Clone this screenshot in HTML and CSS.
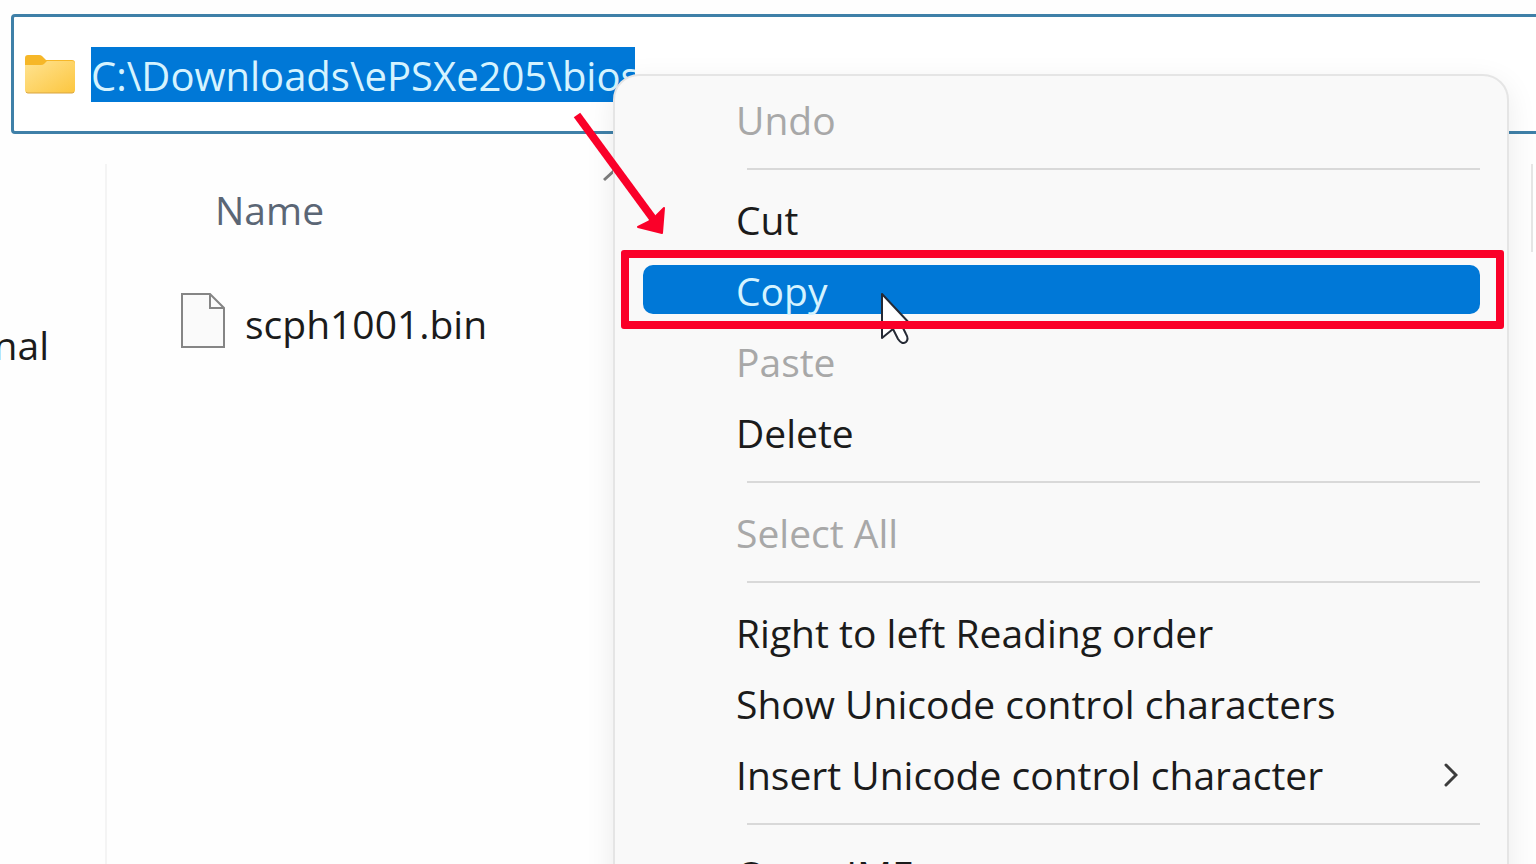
FILE: index.html
```
<!DOCTYPE html>
<html lang="en">
<head>
    <meta charset="UTF-8">
    <meta name="viewport" content="width=device-width, initial-scale=1.0">
    <title>bios</title>
    <link rel="stylesheet" href="styles.css">
</head>
<body>

<div class="explorer">
    <!-- Address bar -->
    <div class="address-bar">
        <svg class="folder-icon" viewBox="0 0 50 40" aria-hidden="true">
            <defs>
                <linearGradient id="folder-front" x1="0" y1="0" x2="1" y2="1">
                    <stop offset="0" stop-color="#ffe391"/>
                    <stop offset="1" stop-color="#fcc63f"/>
                </linearGradient>
            </defs>
            <path d="M0 14V4q0-3 3-3h11q2 0 3 1l4 4h26q3 0 3 3v6z" fill="#f6b728"/>
            <path d="M0 11h16q2 0 3-1l3-3h25q3 0 3 3v26q0 3-3 3H3q-3 0-3-3z" fill="url(#folder-front)"/>
            <path d="M1 38q1 1 2 1h44q1 0 2-1" fill="none" stroke="#d9a441" stroke-width="1"/>
        </svg>
        <input class="address-input" type="text" aria-label="Address" value="C:\Downloads\ePSXe205\bios">
    </div>

    <div class="content">
        <nav class="sidebar">
            <a class="sidebar-link" href="#">nal</a>
        </nav>

        <table class="files">
            <thead>
                <tr><th>Name</th></tr>
            </thead>
            <tbody>
                <tr>
                    <td>
                        <div class="file">
                            <svg class="file-icon" viewBox="0 0 44 56" aria-hidden="true">
                                <path d="M1 1h28l14 14v39H1z" fill="#fafafa" stroke="#858585" stroke-width="2"/>
                                <path d="M29 1v14h14" fill="none" stroke="#858585" stroke-width="2"/>
                            </svg>
                            <span class="file-name">scph1001.bin</span>
                        </div>
                    </td>
                </tr>
            </tbody>
        </table>
        <div class="column-edge"></div>
    </div>

    <svg class="sort-icon" viewBox="0 0 24 14" aria-hidden="true">
        <path d="M1 12L12 2L23 12" fill="none" stroke="#7d7d7d" stroke-width="3"/>
    </svg>

    <!-- Context menu -->
    <div class="menu">
        <button class="menu-item" disabled><span>Undo</span></button>
        <hr>
        <button class="menu-item"><span>Cut</span></button>
        <div class="marked">
            <button class="menu-item active"><span>Copy</span></button>
            <svg class="cursor" viewBox="0 0 34 54" aria-hidden="true">
                <path d="M2 2V46L13 37L18 47Q22 53 26 50Q29 47 26 42L22 34H32Z" fill="#fff" stroke="#252a35" stroke-width="2" stroke-linejoin="round"/>
            </svg>
            <div class="frame"></div>
        </div>
        <button class="menu-item" disabled><span>Paste</span></button>
        <button class="menu-item"><span>Delete</span></button>
        <hr>
        <button class="menu-item" disabled><span>Select All</span></button>
        <hr>
        <button class="menu-item"><span>Right to left Reading order</span></button>
        <button class="menu-item"><span>Show Unicode control characters</span></button>
        <button class="menu-item">
            <span>Insert Unicode control character</span>
            <svg class="chevron" viewBox="0 0 14 24" aria-hidden="true">
                <path d="M2 2L12 12L2 22" fill="none" stroke="#3c3c3c" stroke-width="3" stroke-linecap="round"/>
            </svg>
        </button>
        <hr>
        <button class="menu-item"><span>Open IME</span></button>
    </div>

    <!-- Arrow pointing at Copy -->
    <svg class="arrow" viewBox="0 0 94 122" aria-hidden="true">
        <path d="M5 3L82 108" fill="none" stroke="#fa0029" stroke-width="8"/>
        <path d="M92 96L90 121L66 115L76 110L84 104Z" fill="#fa0029" stroke="#fa0029" stroke-width="2" stroke-linejoin="round"/>
    </svg>
</div>

</body>
</html>
```

FILE: styles.css
```
* {
    box-sizing: border-box;
}
body {
    margin: 0;
    background: #fefefe;
    font-family: "Open Sans", "Noto Sans", sans-serif;
    font-size: 39px;
    color: #1b1b1b;
    overflow: hidden;
}
button, input {
    font: inherit;
    color: inherit;
}
.explorer {
    position: relative;
    height: 100vh;
    padding-top: 14px;
    display: flex;
    flex-direction: column;
    overflow: hidden;
}
.address-bar {
    display: flex;
    align-items: center;
    height: 120px;
    flex-shrink: 0;
    margin: 0 -8px 0 11px;
    padding: 0 10px 0 11px;
    border: 3px solid #3f80a8;
    border-radius: 4px;
    background: #fff;
}
.folder-icon {
    width: 50px;
    height: 40px;
    margin-right: 16px;
}
.address-input {
    width: 544px;
    height: 55px;
    padding: 2px 0 0;
    border: none;
    background: #0078d7;
    color: #d5f3ff;
    font-size: 40px;
}
.content {
    display: flex;
    flex: 1;
    padding-top: 30px;
}
.sidebar {
    display: flex;
    justify-content: flex-end;
    align-items: flex-start;
    width: 107px;
    padding: 154px 56px 0 0;
    border-right: 2px solid #f4f4f4;
    overflow: hidden;
}
.sidebar-link {
    color: inherit;
    text-decoration: none;
}
.files {
    flex: 1;
    align-self: flex-start;
    border-collapse: collapse;
}
.files th {
    height: 90px;
    padding: 0 0 0 108px;
    font-weight: normal;
    text-align: left;
    color: #5b6675;
}
.files td {
    height: 134px;
    padding: 0 0 0 74px;
}
.file {
    display: flex;
    align-items: center;
    gap: 20px;
}
.file-icon {
    width: 44px;
    height: 56px;
}
.file-name {
    padding-top: 4px;
}
.column-edge {
    width: 2px;
    height: 88px;
    margin-right: 3px;
    background: #e6e6e6;
}
.sort-icon {
    position: absolute;
    left: 603px;
    top: 168px;
    width: 24px;
    height: 14px;
}
.menu {
    position: absolute;
    top: 74px;
    left: 613px;
    right: 27px;
    display: flex;
    flex-direction: column;
    padding: 7px 0;
    border: 2px solid #e5e5e5;
    border-radius: 26px;
    background: #f9f9f9;
    box-shadow: 0 8px 30px rgba(0, 0, 0, 0.08);
}
.menu hr {
    height: 2px;
    margin: 14px 27px 13px 132px;
    border: none;
    background: #d9d9d9;
}
.menu-item {
    display: flex;
    align-items: center;
    justify-content: space-between;
    width: calc(100% - 55px);
    height: 49px;
    margin: 11px 27px 11px 28px;
    padding: 2px 22px 0 93px;
    border: none;
    border-radius: 10px;
    background: none;
    line-height: 45px;
    white-space: nowrap;
}
.menu-item:disabled {
    color: #a8a8a8;
}
.menu-item.active {
    background: #0078d7;
    color: #d5f3ff;
}
.chevron {
    width: 14px;
    height: 24px;
}
.marked {
    position: relative;
    display: flow-root;
}
.cursor {
    position: absolute;
    left: 265px;
    top: 38px;
    width: 34px;
    height: 54px;
}
.frame {
    position: absolute;
    top: -4px;
    bottom: -4px;
    left: 6px;
    right: 3px;
    border: 8px solid #fa0029;
    border-radius: 3px;
}
.arrow {
    position: absolute;
    left: 572px;
    top: 112px;
    width: 94px;
    height: 122px;
}
```
